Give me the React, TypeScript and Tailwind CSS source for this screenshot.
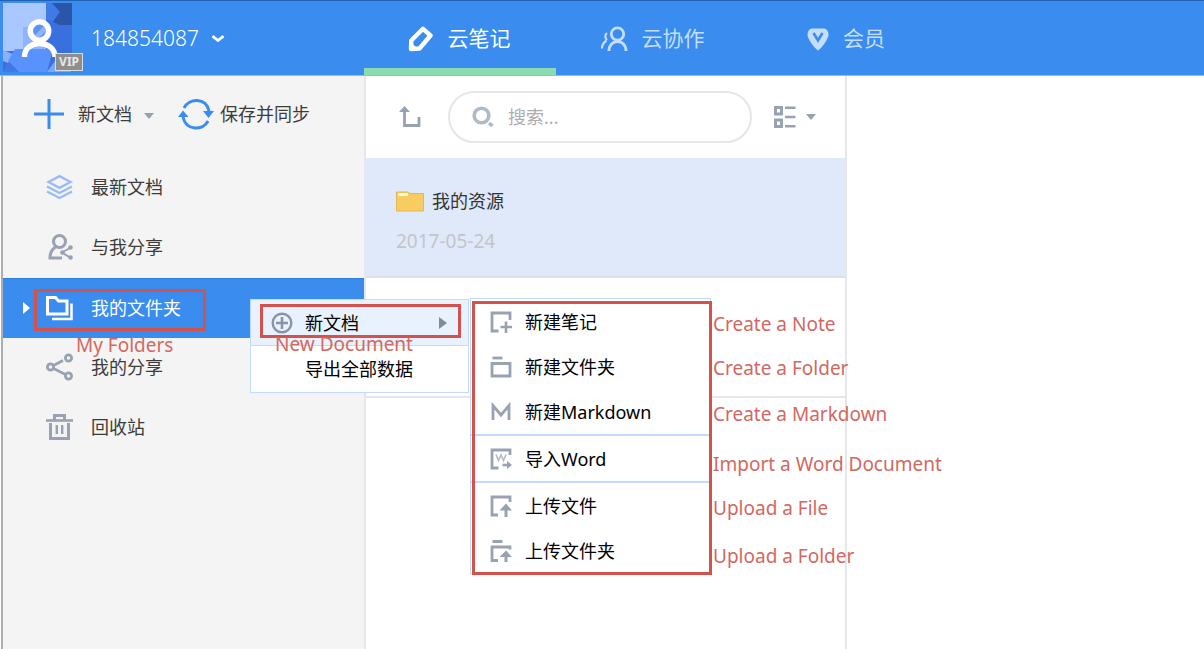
import type { ReactNode } from "react";

type IconProps = { className?: string };

function Avatar() {
  return (
    <svg viewBox="0 0 69 69" className="block h-[69px] w-[69px]" aria-hidden="true">
      <rect width="69" height="69" fill="#3a6fe0" />
      <path d="M0 0H43V48H0Z" fill="#a9c8ff" />
      <path d="M20 24H43V50H20Z" fill="#8db4fc" />
      <path d="M43 0H50L57 9L48 20L43 16Z" fill="#3f7ae6" />
      <path d="M49 0H69V22H48L57 9Z" fill="#2b55a8" />
      <path d="M43 16L57 22H69V50L50 44Z" fill="#3a70de" />
      <path d="M0 47L12 52L5 60L0 58Z" fill="#8bb0fb" />
      <path d="M12 46H50L44 69H16L5 58Z" fill="#5a92fb" />
      <path d="M5 60L16 69H0Z" fill="#3f78e8" />
      <path d="M44 69L52 58L69 69Z" fill="#7aa7fb" />
      <circle cx="36.500" cy="28" r="9.200" fill="#5f93ee" />
      <path d="M30 34L43 21V28L37 34Z" fill="#8db4fc" />
      <circle cx="36.500" cy="28" r="9.200" fill="none" stroke="#fff" strokeWidth="5.500" />
      <path d="M21.500 54C21 36 52 36 52 54" fill="none" stroke="#fff" strokeWidth="5.500" />
    </svg>
  );
}

function PenIcon() {
  return (
    <svg viewBox="0 0 26 26" className="h-[26px] w-[26px]" fill="none" aria-hidden="true">
      <path d="M3 23L3.300 14.500L15 2.800L22.500 9.500L11.500 22.500Z" stroke="#fff" strokeWidth="4.400" strokeLinejoin="round" />
      <path d="M2.500 16L10 23H2.500Z" fill="#fff" />
    </svg>
  );
}

function TeamIcon() {
  return (
    <svg viewBox="0 0 28 26" className="h-[26px] w-7" fill="none" stroke="#c6defd" aria-hidden="true">
      <circle cx="17.500" cy="8" r="6.200" strokeWidth="2.800" />
      <path d="M9 25C9 19 13 15.500 17.500 15.500S26 19 26 25" strokeWidth="2.800" />
      <path d="M7 7C4.500 9 5 12 7 14M6.500 14.500C3.500 16.500 2 19 2 22.500" strokeWidth="2.200" />
    </svg>
  );
}

function GemIcon() {
  return (
    <svg viewBox="0 0 22 24" className="h-6 w-[22px]" aria-hidden="true">
      <path d="M4.500 1.500H17.500Q22 3 21.500 9Q18 18 11 23.500Q4 18 .5 9Q0 3 4.500 1.500Z" fill="#c6defd" />
      <path d="M6.500 6L11 13.500L15.500 6" fill="none" stroke="#3a8cee" strokeWidth="2.600" />
    </svg>
  );
}

function ChevronIcon() {
  return (
    <svg viewBox="0 0 14 10" className="h-[10px] w-[14px]" aria-hidden="true">
      <path d="M1.500 2.200L7 6.500L12.500 2.200" fill="none" stroke="#fff" strokeWidth="2.800" />
    </svg>
  );
}

function PlusIcon() {
  return (
    <svg viewBox="0 0 30 30" className="h-[30px] w-[30px]" aria-hidden="true">
      <path d="M15 0V30M0 15H30" stroke="#3a8cee" strokeWidth="3" />
    </svg>
  );
}

function SyncIcon() {
  return (
    <svg viewBox="0 0 36 32" className="h-8 w-9" aria-hidden="true">
      <path d="M6 10C11 0 28 -1 31 13M30 23C25 33 8 33 5 19" fill="none" stroke="#3a8cee" strokeWidth="3" />
      <path d="M25 13H36L30.500 20ZM0 19H10.500L5 12.500Z" fill="#3a8cee" />
    </svg>
  );
}

function Caret({ className = "" }: IconProps) {
  return (
    <svg viewBox="0 0 10 6" className={`h-[6px] w-[10px] ${className}`} aria-hidden="true">
      <path d="M0 0H10L5 6Z" fill="#98a1b2" />
    </svg>
  );
}

function LayersIcon() {
  return (
    <svg viewBox="0 0 27 26" className="h-[26px] w-[27px]" fill="none" stroke="#9abcf6" strokeWidth="2.400" aria-hidden="true">
      <path d="M2.500 8L13.500 2.200L24.500 8L13.500 13.800Z" />
      <path d="M1 12.500L13.500 19L26 12.500M1 17.500L13.500 24L26 17.500" />
    </svg>
  );
}

function SharedIcon() {
  return (
    <svg viewBox="0 0 27 26" className="h-[26px] w-[27px]" fill="none" stroke="#98a2b3" strokeWidth="3" aria-hidden="true">
      <circle cx="13.500" cy="7.500" r="6" />
      <path d="M9.500 13Q4 16.500 4 24H16" />
      <path d="M24 14L16 18.500L24 23.500" strokeWidth="2" />
      <g fill="#98a2b3" stroke="none">
        <circle cx="24.500" cy="13.500" r="2.300" />
        <circle cx="16.500" cy="18.500" r="2.300" />
        <circle cx="24.500" cy="23.500" r="2.300" />
      </g>
    </svg>
  );
}

function FoldersIcon() {
  return (
    <svg viewBox="0 0 27 26" className="h-[26px] w-[27px]" fill="none" stroke="#fff" strokeWidth="3" aria-hidden="true">
      <path d="M1.500 2.500H9.500L12.500 6H21V19H1.500Z" />
      <path d="M25.500 8.500V24H6" strokeWidth="2.500" />
    </svg>
  );
}

function ShareIcon() {
  return (
    <svg viewBox="0 0 27 28" className="h-7 w-[27px]" fill="none" stroke="#98a2b3" strokeWidth="2.800" aria-hidden="true">
      <circle cx="4.500" cy="14" r="3.100" />
      <circle cx="22.500" cy="5" r="3.100" />
      <circle cx="22.500" cy="23" r="3.100" />
      <path d="M7.500 12.500L17 7.500M7.500 15.500L19.500 21.500" strokeWidth="2.600" />
    </svg>
  );
}

function TrashIcon() {
  return (
    <svg viewBox="0 0 27 26" className="h-[26px] w-[27px]" fill="none" stroke="#98a2b3" aria-hidden="true">
      <path d="M0 6.500H27" strokeWidth="2.600" />
      <path d="M8.500 6V1.500H18.500V6M4.500 9V24.500H22.500V9" strokeWidth="3" />
      <path d="M10.800 11V20M16.200 11V20" strokeWidth="2.400" />
    </svg>
  );
}

function UpIcon() {
  return (
    <svg viewBox="0 0 22 22" className="h-[22px] w-[22px]" aria-hidden="true">
      <path d="M5.500 4V19.500H20V11" fill="none" stroke="#98a2b3" strokeWidth="2.800" />
      <path d="M0 6L5.500 0L11 6Z" fill="#98a2b3" />
    </svg>
  );
}

function SearchIcon() {
  return (
    <svg viewBox="0 0 22 22" className="h-[22px] w-[22px]" fill="none" stroke="#b0bac7" aria-hidden="true">
      <circle cx="9.500" cy="9.500" r="7.300" strokeWidth="3.600" />
      <path d="M17 17L20.500 20" strokeWidth="3.600" />
    </svg>
  );
}

function ViewIcon() {
  return (
    <svg viewBox="0 0 22 22" className="h-[22px] w-[22px]" fill="none" stroke="#98a2b3" aria-hidden="true">
      <path d="M1.500 1.500H7.500V8H1.500ZM1.500 14H7.500V20.500H1.500Z" strokeWidth="3" />
      <path d="M11 1.800H21.500M11 11H21.500M11 20.200H21.500" strokeWidth="2.400" />
    </svg>
  );
}

function YellowFolder() {
  return (
    <svg viewBox="0 0 28 21" className="h-[21px] w-7" aria-hidden="true">
      <path d="M.5 1H12.500L13.500 2.500H27.500V20H.5Z" fill="#f7cd61" stroke="#e3b84d" />
      <path d="M2 2H12V5H2Z" fill="#fff8d8" />
    </svg>
  );
}

function RowSvg({ children }: { children: ReactNode }) {
  return (
    <svg viewBox="0 0 22 22" className="h-[22px] w-[22px] shrink-0" fill="none" stroke="#98a2b3" strokeWidth="2.800" aria-hidden="true">
      {children}
    </svg>
  );
}

const noteIcon = (
  <RowSvg>
    <path d="M8.500 20H2V2H20V9" />
    <path d="M16 10.500V22M10.500 16H22" strokeWidth="2.600" />
  </RowSvg>
);
const folderIcon = (
  <RowSvg>
    <path d="M2 7.500H20V20H2Z" />
    <path d="M2.500 2H12.500" />
  </RowSvg>
);
const markdownIcon = (
  <RowSvg>
    <path d="M3 19V4.500L11 14L19 4.500V19" />
  </RowSvg>
);
const wordIcon = (
  <RowSvg>
    <path d="M8.500 20H2V2H20V7" />
    <path d="M6 6.500L8.500 12.500L11 7L13.500 12.500L16 6.500" stroke="#b3bac7" strokeWidth="1.600" />
    <path d="M12.500 17H18" strokeWidth="2.600" />
    <path d="M17 13V21L22 17Z" fill="#98a2b3" stroke="none" />
  </RowSvg>
);
const uploadIcon = (
  <RowSvg>
    <path d="M8 20H2V2H20V7" />
    <path d="M16 14V22" strokeWidth="3" />
    <path d="M9.500 15.500L16 8.500L22 15.500Z" fill="#98a2b3" stroke="none" />
  </RowSvg>
);
const uploadFolderIcon = (
  <RowSvg>
    <path d="M8 20.500H2V7H20V9.500M2.500 1.500H12.500" />
    <path d="M16 15V22" strokeWidth="3" />
    <path d="M9.500 17L16 10.500L22 17Z" fill="#98a2b3" stroke="none" />
  </RowSvg>
);

const submenuGroups = [
  [
    { label: "新建笔记", icon: noteIcon },
    { label: "新建文件夹", icon: folderIcon },
    { label: "新建Markdown", icon: markdownIcon },
  ],
  [{ label: "导入Word", icon: wordIcon }],
  [
    { label: "上传文件", icon: uploadIcon },
    { label: "上传文件夹", icon: uploadFolderIcon },
  ],
];

function Note({ className, children }: { className: string; children: ReactNode }) {
  return (
    <span className={`pointer-events-none absolute text-[19px] leading-6 whitespace-nowrap text-[#d2685f] ${className}`}>
      {children}
    </span>
  );
}

function Frame({ className }: { className: string }) {
  return <span className={`pointer-events-none absolute border-3 border-[#d4524c] ${className}`} />;
}

function Submenu() {
  return (
    <div className="absolute -top-0.5 left-[219px] w-[241px] border border-[#c3dafa] bg-white">
      {submenuGroups.map((group, i) => (
        <ul key={i} className="border-t-2 border-[#c3dafa] first:border-t-0">
          {group.map((item) => (
            <li key={item.label}>
              <button type="button" className="flex h-[45px] w-full items-center gap-[13px] pl-[19px] text-lg text-black">
                {item.icon}
                {item.label}
              </button>
            </li>
          ))}
        </ul>
      ))}
      <Frame className="-right-0.5 -bottom-0.5 left-px top-0.5" />
      <Note className="left-[242px] top-[13px]">Create a Note</Note>
      <Note className="left-[242px] top-[57px]">Create a Folder</Note>
      <Note className="left-[242px] top-[103px]">Create a Markdown</Note>
      <Note className="left-[242px] top-[153px]">Import a Word Document</Note>
      <Note className="left-[242px] top-[197px]">Upload a File</Note>
      <Note className="left-[242px] top-[245px]">Upload a Folder</Note>
    </div>
  );
}

function ContextMenu() {
  return (
    <div className="absolute left-[247px] top-[21px] z-10 w-[219px] border border-[#c3dafa] bg-white text-lg text-black">
      <button type="button" className="flex h-[46px] w-full items-center gap-3 border-b border-[#c3dafa] bg-[#e8f1fe] pl-5">
        <svg viewBox="0 0 22 22" className="h-[22px] w-[22px]" fill="none" stroke="#8893a7" aria-hidden="true">
          <circle cx="11" cy="11" r="9.300" strokeWidth="2.400" />
          <path d="M11 5V17M5 11H17" strokeWidth="2.600" />
        </svg>
        新文档
        <svg viewBox="0 0 8 12" className="mr-[21px] ml-auto h-3 w-2" aria-hidden="true">
          <path d="M0 0L8 6L0 12Z" fill="#858b94" />
        </svg>
      </button>
      <button type="button" className="flex h-[46px] w-full items-center pl-[54px]">
        导出全部数据
      </button>
      <Frame className="left-[9px] top-1 h-[34px] w-[201px]" />
      <Note className="left-6 top-8">New Document</Note>
      <Submenu />
    </div>
  );
}

const navItems = [
  { label: "最新文档", icon: <LayersIcon /> },
  { label: "与我分享", icon: <SharedIcon /> },
  { label: "我的文件夹", icon: <FoldersIcon />, active: true },
  { label: "我的分享", icon: <ShareIcon /> },
  { label: "回收站", icon: <TrashIcon /> },
];

function Sidebar() {
  return (
    <aside className="relative z-10 w-[363px] shrink-0 border-l-2 border-[#a9aeb3] bg-[#f4f4f4] text-lg text-[#3c3c3c]">
      <div className="flex h-[82px] items-center pb-1.5 pl-[31px]">
        <button type="button" className="flex items-center">
          <PlusIcon />
          <span className="ml-3.5">新文档</span>
          <Caret className="mt-1 ml-3" />
        </button>
        <button type="button" className="ml-6 flex items-center gap-1.5">
          <SyncIcon />
          保存并同步
        </button>
      </div>
      <nav>
        <ul>
          {navItems.map((item) => (
            <li key={item.label} className="relative">
              <a
                href="#"
                className={`flex h-[60px] items-center gap-[18px] pb-0.5 pl-[43px] ${item.active ? "border-t border-[#2f7fe0] bg-[#3a8cee] text-white" : ""}`}
              >
                {item.icon}
                {item.label}
              </a>
              {item.active && (
                <>
                  <svg viewBox="0 0 7 12" className="absolute left-5 top-6 h-3 w-[7px]" aria-hidden="true">
                    <path d="M0 0L7 6L0 12Z" fill="#fff" />
                  </svg>
                  <Frame className="left-[31px] top-[11px] h-[42px] w-[172px]" />
                  <Note className="left-[73px] top-[55px] z-10">My Folders</Note>
                  <ContextMenu />
                </>
              )}
            </li>
          ))}
        </ul>
      </nav>
    </aside>
  );
}

function DocumentList() {
  return (
    <section className="w-[483px] shrink-0 border-x-2 border-[#e6e7ec] bg-white">
      <div className="flex h-[82px] items-center pl-[33px]">
        <button type="button" aria-label="上一级">
          <UpIcon />
        </button>
        <label className="ml-[27px] flex h-[52px] w-[304px] items-center gap-3.5 rounded-full border-2 border-[#e6e6e6] pl-[22px]">
          <SearchIcon />
          <input
            type="search"
            aria-label="搜索"
            placeholder="搜索..."
            className="w-56 bg-transparent text-lg outline-none placeholder:text-[#adadad]"
          />
        </label>
        <button type="button" aria-label="视图" className="ml-[22px] flex items-center gap-2.5">
          <ViewIcon />
          <Caret />
        </button>
      </div>
      <ul>
        <li className="h-[120px] border-b-2 border-[#e0e2ea] bg-[#e0e9fa] pt-[29px] pl-[30px]">
          <a href="#" className="flex items-center gap-2 text-lg leading-7 text-[#333]">
            <YellowFolder />
            我的资源
          </a>
          <time className="mt-3 block text-[19px] leading-7 text-[#c3c5ca]">2017-05-24</time>
        </li>
        <li className="h-[120px] border-b-2 border-[#e6e7ec]" />
      </ul>
    </section>
  );
}

export default function App() {
  return (
    <div className="flex min-h-screen flex-col bg-white font-['Noto_Sans','Noto_Sans_CJK_SC',sans-serif]">
      <header className="flex h-[76px] border-t border-b border-t-[#2161b4] border-b-[#8bbaf5] bg-[#3a8cee] text-white">
        <div className="flex w-[364px] shrink-0 pt-0.5 pl-[3px]">
          <div className="relative">
            <Avatar />
            <span className="absolute -right-[11px] bottom-1 border border-[#dcdcdc] bg-[#8e8e8e] px-[3px] text-xs leading-4 font-bold text-[#e8e8e8]">
              VIP
            </span>
          </div>
          <button type="button" className="ml-[19px] flex items-center gap-3 text-[21px] font-light">
            184854087
            <ChevronIcon />
          </button>
        </div>
        <nav className="flex text-[21px]">
          <a href="#" className="flex w-48 items-center justify-center gap-3.5 border-b-[7px] border-[#8adbb0] pt-[9px] pr-0.5">
            <PenIcon />
            云笔记
          </a>
          <a href="#" className="flex w-48 items-center justify-center gap-3.5 pt-0.5 text-[#c6defd]">
            <TeamIcon />
            云协作
          </a>
          <a href="#" className="ml-0.5 flex w-48 items-center justify-center gap-3.5 pt-0.5 text-[#c6defd]">
            <GemIcon />
            会员
          </a>
        </nav>
      </header>
      <div className="flex flex-1 pl-px">
        <Sidebar />
        <DocumentList />
        <main className="flex-1" />
      </div>
    </div>
  );
}
